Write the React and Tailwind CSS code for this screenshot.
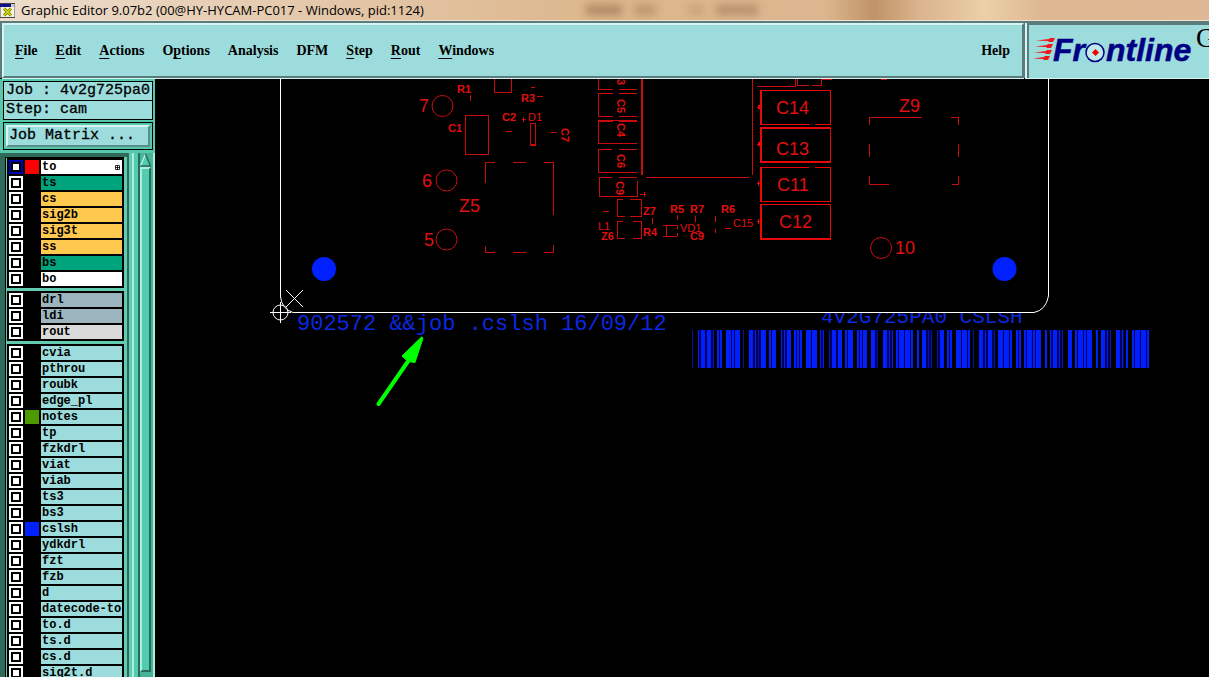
import React from "react";

const menus = [
  ["", "F", "ile"],
  ["", "E", "dit"],
  ["", "A", "ctions"],
  ["O", "p", "tions"],
  ["Analysis", "", ""],
  ["DFM", "", ""],
  ["", "S", "tep"],
  ["", "R", "out"],
  ["", "W", "indows"],
];

const AQUA = "bg-[#9cdcdc]";
const AMBER = "bg-[#ffc84f]";
const GREEN = "bg-[#00a47c]";

const groups = [
  [
    { name: "to", bg: "bg-white", swatch: "bg-[#ff0000]", active: true },
    { name: "ts", bg: GREEN },
    { name: "cs", bg: AMBER },
    { name: "sig2b", bg: AMBER },
    { name: "sig3t", bg: AMBER },
    { name: "ss", bg: AMBER },
    { name: "bs", bg: GREEN },
    { name: "bo", bg: "bg-white" },
  ],
  [
    { name: "drl", bg: "bg-[#9cb4be]" },
    { name: "ldi", bg: "bg-[#9cb4be]" },
    { name: "rout", bg: "bg-[#dadada]" },
  ],
  [
    "cvia", "pthrou", "roubk", "edge_pl", "notes", "tp", "fzkdrl", "viat", "viab",
    "ts3", "bs3", "cslsh", "ydkdrl", "fzt", "fzb", "d", "datecode-to", "to.d",
    "ts.d", "cs.d", "sig2t.d",
  ].map((name) => ({
    name,
    bg: AQUA,
    swatch: name === "notes" ? "bg-[#4a9a00]" : name === "cslsh" ? "bg-[#0020ff]" : undefined,
  })),
];

function TitleBar() {
  return (
    <header className="flex h-[21px] shrink-0 items-center gap-[6px] overflow-hidden border-b border-[#f3e0cc] bg-linear-to-r from-[#ecdccb] via-[#dcb68c] to-[#deb894]">
      <svg width="15" height="15" viewBox="0 0 15 15" className="shrink-0" aria-hidden="true">
        <rect x="0" y="0.5" width="15" height="14" fill="#f4f4e4" stroke="#444" />
        <rect x="0" y="1" width="11" height="3" fill="#10108a" />
        <rect x="11" y="1" width="3" height="3" fill="#c8c8c8" />
        <path d="M4 5.500L11 12.500M11 5.500L4 12.500" stroke="#6b6b00" strokeWidth="3" />
        <path d="M4 5.500L11 12.500M11 5.500L4 12.500" stroke="#d8e000" strokeWidth="1.500" />
      </svg>
      <h1 className="shrink-0 whitespace-nowrap font-['Open_Sans',sans-serif] text-[13px] leading-[20px] text-black">
        Graphic Editor 9.07b2 (00@HY-HYCAM-PC017 - Windows, pid:1124)
      </h1>
      <div className="ml-[156px] flex shrink-0 gap-[12px] blur-[4px]" aria-hidden="true">
        <i className="h-[10px] w-[36px] bg-[#9a7450]/70" />
        <i className="h-[10px] w-[22px] bg-[#9a7450]/50" />
        <i className="ml-[20px] h-[10px] w-[16px] bg-[#9a7450]/30" />
        <i className="h-[10px] w-[42px] bg-[#9a7450]/60" />
      </div>
      <div className="ml-[60px] h-[20px] w-[100px] shrink-0 bg-linear-to-r from-transparent via-[#c09468] to-transparent" />
      <div className="h-[20px] w-[110px] shrink-0 bg-linear-to-r from-transparent via-[#ecd0a8] to-transparent" />
    </header>
  );
}

function Logo() {
  return (
    <svg width="180" height="49" viewBox="1029 25 180 49" className="shrink-0" role="img" aria-label="Frontline">
      <g fill="#f01818">
        <path d="M1036 40.500L1049 39L1050 38H1055L1053 42H1049L1048 41Z" />
        <path d="M1035 46.500L1047 45L1048 44H1053L1051 48H1047L1046 47Z" />
        <path d="M1034 52.500L1046 51L1047 50H1052L1050 54H1046L1045 53Z" />
        <path d="M1033 58.500L1044 57L1045 56H1050L1048 60H1044L1043 59Z" />
      </g>
      <g fill="#000084" stroke="#000084" strokeWidth="0.5" className="font-['Liberation_Sans',sans-serif] text-[32px] font-bold italic">
        <text x="1053" y="61">Fr</text>
        <text x="1106" y="61">ntline</text>
      </g>
      <circle cx="1095" cy="52.500" r="9" fill="#bfeaea" stroke="#000084" strokeWidth="1.500" />
      <path d="M1095.500 49L1099 52.500L1095.500 56L1092 52.500Z" fill="#f00000" />
      <text x="1196" y="47" className="font-['Liberation_Serif',serif] text-[27px]">G</text>
    </svg>
  );
}

function MenuBar() {
  return (
    <div className="flex h-[57px] shrink-0 border-t-2 border-[#5a7c7c] bg-[#5a7c7c]">
      <nav className="ml-[2px] flex flex-1 items-center border-2 border-r-[#5a7c7c] border-b-[#5a7c7c] border-t-[#d6f4f4] border-l-[#d6f4f4] bg-[#9cdcdc] pr-[12px] pl-[11px] font-['Liberation_Serif',serif] text-[14px] leading-[20px] font-bold text-black shadow-[0_2px_0_#d6f4f4]">
        <div className="flex gap-[18px]">
          {menus.map(([a, u, b]) => (
            <button key={a + u + b} type="button">
              {a}
              <span className="underline decoration-1 underline-offset-[3px] [text-decoration-skip-ink:none]">{u}</span>
              {b}
            </button>
          ))}
        </div>
        <button type="button" className="ml-auto">Help</button>
      </nav>
      <div className="ml-px flex overflow-hidden border-l-2 border-[#d6f4f4] shadow-[0_2px_0_#d6f4f4]">
        <div className="border-t-2 border-l-2 border-[#5a7c7c] bg-[#9cdcdc]">
          <Logo />
        </div>
      </div>
    </div>
  );
}

function LayerRow({ layer }) {
  const id = "layer-" + layer.name;
  return (
    <li className="flex h-[16px] items-center gap-[2px] pr-[2px] pl-[2px]">
      <span className={"flex size-[14px] shrink-0 items-center justify-center " + (layer.active ? "bg-[#0000b4]" : "bg-white")}>
        <input id={id} type="checkbox" className="size-[10px] appearance-none border-2 border-black bg-white" />
      </span>
      <span className={"size-[14px] shrink-0 " + (layer.swatch || "bg-black")} />
      <label
        htmlFor={id}
        className={"flex h-[14px] flex-1 items-center overflow-hidden pl-px text-[12px] leading-[14px] font-bold whitespace-nowrap " + layer.bg}
      >
        {layer.name}
        {layer.active && (
          <svg width="5" height="5" viewBox="0 0 5 5" className="mr-[2px] ml-auto" aria-hidden="true">
            <path d="M0.500 0.500H4.500V4.500H0.500ZM2.500 0V5M0 2.500H5" fill="none" stroke="#000" strokeWidth="0.800" />
          </svg>
        )}
      </label>
    </li>
  );
}

function Sidebar() {
  return (
    <aside className="flex w-[155px] shrink-0 flex-col bg-[#58c8ac] pt-[2px] font-['Liberation_Mono',monospace] text-black">
      <dl className="mr-[2px] ml-[3px] flex flex-col border border-black text-[15px] leading-[18px] font-medium whitespace-nowrap">
        <div className="flex h-[19px] border-b border-black bg-[#9cdcdc] pl-[2px] [-webkit-text-stroke:0.3px_black]">
          <dt className="whitespace-pre">Job : </dt>
          <dd>4v2g725pa0</dd>
        </div>
        <div className="flex h-[18px] bg-[#9cdcdc] pl-[2px] [-webkit-text-stroke:0.3px_black]">
          <dt className="whitespace-pre">Step: </dt>
          <dd>cam</dd>
        </div>
      </dl>
      <div className="mt-[2px] mr-[2px] ml-[3px] border border-black p-[2px]">
        <button
          type="button"
          className="block h-[22px] w-full border-2 border-t-[#d6f4f4] border-r-[#5a8c8c] border-b-[#5a8c8c] border-l-[#d6f4f4] bg-[#9cdcdc] pl-px text-left text-[15px] leading-[18px] [-webkit-text-stroke:0.3px_black]"
        >
          Job Matrix ...
        </button>
      </div>
      <div className="mt-[3px] flex min-h-0 flex-1 overflow-hidden border-l-[5px] border-[#2f6a5a]">
        <div className="w-[122px] shrink-0 border-t-4 border-[#2f6a5a] bg-[#62cbb0] pr-[3px]">
          <div className="flex flex-col gap-[3px] border-t border-l border-black pl-px">
            {groups.map((g, i) => (
              <ul key={i} className="flex flex-col bg-black pt-px pb-px">
                {g.map((l) => (
                  <LayerRow key={l.name} layer={l} />
                ))}
              </ul>
            ))}
          </div>
        </div>
        <div className="flex w-[11px] shrink-0 border-r-4 border-l-2 border-r-[#52cbb0] border-l-[#2f6a5a] bg-[#62cbb0]">
          <span className="ml-auto w-[2px] bg-[#a8f0dc]" />
        </div>
        <div className="flex w-[17px] shrink-0 flex-col border-x-2 border-l-[#2a6b5c] border-r-[#a8f0dc] bg-[#48b398] pr-[2px]">
          <svg width="11" height="14" viewBox="0 0 11 14" className="shrink-0" aria-hidden="true">
            <path d="M5.500 1L10.500 13H0.500Z" fill="#52cbb0" />
            <path d="M5.500 1L0.500 13" stroke="#a8f0dc" strokeWidth="1.500" />
            <path d="M5.500 1L10.500 13H0.500" fill="none" stroke="#2a6b5c" strokeWidth="1.500" />
          </svg>
          <span className="mb-[5px] flex-1 border-2 border-t-[#a8f0dc] border-r-[#2a6b5c] border-b-[#2a6b5c] border-l-[#a8f0dc] bg-[#52cbb0]" />
        </div>
      </div>
    </aside>
  );
}

const bigLabels = [
  ["C14", 776, 114], ["C13", 776, 155], ["C11", 777, 191], ["C12", 779, 228],
  ["Z9", 899, 112], ["Z5", 459, 212], ["7", 419, 112], ["6", 422, 187], ["5", 424, 246], ["10", 895, 254],
];

const smallLabels = [
  ["R1", 457, 93], ["R3", 521, 102], ["C2", 502, 121], ["C1", 448, 132], ["Z7", 643, 215],
  ["R5", 670, 213], ["R7", 690, 213], ["R6", 721, 213], ["Z6", 601, 240], ["R4", 643, 236], ["C9", 690, 240],
];

const thinLabels = [["D1", 528, 121], ["C15", 733, 227], ["L1", 598, 230], ["VD1", 680, 232]];

const turnedLabels = [["3", 617, 79], ["C5", 617, 99], ["C4", 617, 123], ["C6", 617, 154], ["C9", 616, 181], ["C7", 561, 128]];

// Barcode bars as [x, width] in thirds of a pixel from the left edge of the code.
const bars = [
  [0, 2], [17, 3], [26, 12], [44, 12], [62, 2], [74, 6], [83, 6], [101, 15], [119, 6], [128, 15], [152, 2],
  [170, 12], [188, 3], [197, 2], [206, 15], [230, 6], [239, 12], [266, 3], [275, 3], [284, 12], [305, 6],
  [314, 6], [323, 6], [341, 15], [359, 15], [383, 3], [392, 3], [410, 2], [419, 12], [437, 12], [458, 6],
  [467, 15], [494, 6], [503, 6], [512, 12], [536, 12], [554, 2], [572, 12], [590, 3], [599, 3], [611, 6],
  [620, 15], [638, 15], [656, 6], [674, 6], [689, 12], [707, 2], [716, 2], [734, 2], [743, 12], [764, 6],
  [773, 6], [791, 15], [809, 15], [827, 6], [842, 2], [860, 12], [878, 3], [887, 12], [905, 2], [917, 15],
  [935, 15], [953, 6], [971, 6], [980, 6], [995, 6], [1004, 15], [1022, 6], [1031, 15], [1058, 6], [1073, 4],
  [1082, 12], [1100, 3], [1109, 2], [1127, 12], [1148, 6], [1157, 15], [1175, 6], [1184, 15], [1211, 6],
  [1226, 12], [1244, 3], [1253, 2], [1271, 12], [1289, 4], [1301, 6], [1319, 6], [1328, 15], [1346, 15],
  [1364, 6],
];

// Narrow gaps between neighbouring bars, filled with a darker blue.
const gaps = bars
  .slice(0, -1)
  .map(([x, w], i) => [x + w, bars[i + 1][0] - x - w])
  .filter(([, w]) => w <= 7);

function Board() {
  return (
    <svg width="1054" height="598" viewBox="155 79 1054 598" className="block" role="img" aria-label="Board view">
      <defs>
        <clipPath id="below-outline">
          <rect x="800" y="313" width="240" height="20" />
        </clipPath>
      </defs>

      <g fill="none" stroke="#c80c0c" strokeWidth="1" shapeRendering="crispEdges">
        <path d="M494.500 79V92.500H511.500V79M465.500 115.500H488.500V154.500H465.500ZM530.500 123.500H535.500V145.500H530.500ZM530 144.500H536" />
        <path d="M470.500 95V101M531 87.500H535M537 96.500H543M506 131.500H512M551 132.500H557M523.500 117V122M522 119.500H526" />
        <path d="M485.500 183V162.500H495M513 162.500H526M544 162.500H553.500V215M485.500 246V252.500H495M513 252.500H526M544 252.500H553.500V245" />
        <path d="M598.500 79V90M598 89.500H613M619 89.500H637M598 93.500H613M619 93.500H637M598.500 93V117M598 116.500H613M619 116.500H637" />
        <path d="M598 120.500H637M598 121.500H613M619 121.500H637M598.500 120V143.500H637M598 149.500H612M619 149.500H637M598.500 149V172.500H637" />
        <path d="M612 177.500H599.500V196.500H637.500V181M619 177.500H637M640 194.500H646M644.500 192V197" />
        <path d="M623 199.500H617.500V216.500H625M630 199.500H641.500V216.500H630M623 221.500H617.500V238.500H625M633 221.500H641.500V238.500H633" />
        <path d="M646 177.500H749M752.500 79V175M663 225.500H677M663 236.500H677M666.500 225V236M677 225V229M677 233V236" />
        <path d="M652.500 218V224M677.500 215V220M695.500 216V222M715.500 216V222M715.500 229V233M603 211.500H609M725 228.500H731" />
        <path d="M757 86.500H795.500V79M797.500 79V85.500H809M812 85.500H821.500V79.500H832M881 79.500H887" />
        <path d="M869.500 125V117.500H922M951 117.500H958.500V125M869.500 144V157M958.500 144V157M869.500 176V184.500H889M952 184.500H958.500V176" />
        <path d="M642 79V175" strokeWidth="2" />
      </g>
      <g fill="none" stroke="#e80808" shapeRendering="crispEdges">
        <path d="M761.500 90.500H830.500V124.500H761.500ZM761.500 127.500H830.500V162.500H761.500ZM761.500 167.500H830.500V201.500H761.500ZM761.500 204.500H830.500V239.500H761.500Z" />
        <path d="M761 90V125M761 127V163M761 167V202M761 204V240M761 128H831M761 162H831M761 239H831" strokeWidth="2" />
        <path d="M757 183.500H761M758.500 181V186M757 221.500H761M758.500 219V224M757 107.500H761M757 144.500H761" />
        <path d="M758 107H761M758 144H761" strokeWidth="4" />
        <path d="M810 124.500H815M809 167.500H815" stroke="#000" />
      </g>
      <g fill="none" stroke="#c81010">
        <circle cx="442.500" cy="106" r="10.500" />
        <circle cx="446.500" cy="180.500" r="10.500" />
        <circle cx="446.500" cy="239.500" r="10.500" />
        <circle cx="881" cy="248" r="10.500" />
      </g>
      <g fill="#e01010" className="font-['Liberation_Sans',sans-serif]">
        <g className="text-[18px]">
          {bigLabels.map(([t, x, y]) => <text key={t} x={x} y={y}>{t}</text>)}
        </g>
        <g className="text-[11px] font-bold">
          {smallLabels.map(([t, x, y]) => <text key={t} x={x} y={y}>{t}</text>)}
          {turnedLabels.map(([t, x, y]) => <text key={t} transform={`translate(${x} ${y}) rotate(90)`}>{t}</text>)}
        </g>
        <g className="text-[11px]">
          {thinLabels.map(([t, x, y]) => <text key={t} x={x} y={y}>{t}</text>)}
        </g>
      </g>

      <g fill="#0020ff">
        <circle cx="324" cy="269" r="12" />
        <circle cx="1004.500" cy="269" r="12" />
        <g fill="#0c28e0" className="font-['Liberation_Mono',monospace]">
          <text x="297" y="330" className="text-[22px]">902572 &amp;&amp;job .cslsh 16/09/12</text>
          <text x="821" y="323" className="text-[21px]" clipPath="url(#below-outline)">4V2G725PA0 CSLSH</text>
        </g>
        {gaps.map(([x, w]) => (
          <rect key={x} x={692.3 + x / 3} y="330" width={w / 3} height="38" fill="#000058" />
        ))}
        {bars.map(([x, w]) => (
          <rect key={x} x={692.3 + x / 3} y="330" width={w / 3} height="38" />
        ))}
      </g>

      <g fill="none" stroke="#fff">
        <path d="M280.500 79V297Q282 309 293 312.500H1034Q1046 310 1048.500 296V79" />
        <circle cx="280.500" cy="312.500" r="7.500" />
        <path d="M270 312.500H291M280.500 302V323M286 290L303 307M303 290L286 307" />
      </g>
      <path d="M378.500 404L411 357" stroke="#00ff00" strokeWidth="4" strokeLinecap="round" />
      <path d="M421.500 337L402 356L408 361.500L415 362.500L423 338Z" fill="#00ff00" stroke="#00ff00" strokeLinejoin="round" />
    </svg>
  );
}

export default function App() {
  return (
    <div className="flex h-screen flex-col overflow-hidden bg-black">
      <TitleBar />
      <MenuBar />
      <main className="mt-px flex min-h-0 flex-1">
        <Sidebar />
        <section className="min-w-0 flex-1 overflow-hidden bg-black">
          <Board />
        </section>
      </main>
    </div>
  );
}
